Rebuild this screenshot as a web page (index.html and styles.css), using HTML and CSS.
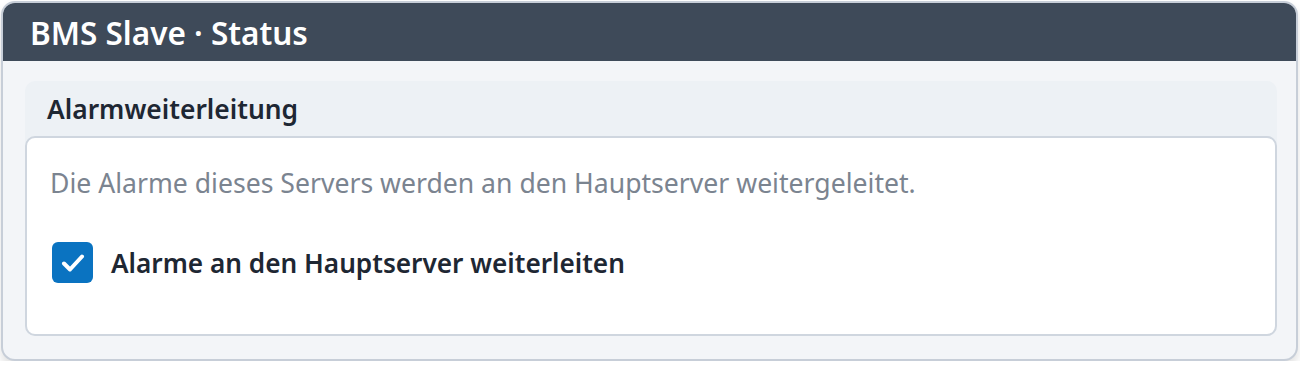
FILE: index.html
```html
<!DOCTYPE html>
<html lang="de">
<head>
<meta charset="utf-8">
<link rel="stylesheet" href="styles.css">
</head>
<body>
<div class="card">
  <div class="card-header">BMS Slave · Status</div>
  <div class="card-body">
    <section class="section">
      <div class="section-title">Alarmweiterleitung</div>
      <div class="section-content">
        <p class="desc">Die Alarme dieses Servers werden an den Hauptserver weitergeleitet.</p>
        <label class="check">
          <span class="box">
            <svg width="26" height="26" viewBox="0 0 26 26"><path d="M4 13.5 L10 19.5 L22 6.5" fill="none" stroke="#fff" stroke-width="4" stroke-linecap="round" stroke-linejoin="round"/></svg>
          </span>
          <span class="check-label">Alarme an den Hauptserver weiterleiten</span>
        </label>
      </div>
    </section>
  </div>
</div>
</body>
</html>
```
FILE: styles.css
```css
* { box-sizing: border-box; }
html, body { margin: 0; background: #ffffff; }
body {
  padding: 1px 2px 0 1px;
  font-family: "Noto Sans", "Open Sans", sans-serif;
}
.card {
  width: 1297px;
  border: 2px solid #c7ced8;
  border-radius: 14px;
  background: #f3f5f8;
  overflow: hidden;
  box-shadow: 0 6px 10px rgba(0, 0, 0, 0.12);
}
.card-header {
  height: 58px;
  background: #3e4a59;
  color: #ffffff;
  font-size: 31.5px;
  font-weight: 600;
  display: flex;
  align-items: center;
  padding-left: 27px;
}
.card-body {
  padding: 20px 19px 23px 22px;
}
.section {
  background: #edf1f5;
  border-radius: 10px;
}
.section-title {
  height: 55px;
  display: flex;
  align-items: center;
  padding-left: 22px;
  font-size: 26.4px;
  font-weight: 600;
  color: #1e2733;
}
.section-content {
  background: #ffffff;
  border: 2px solid #cfd6df;
  border-radius: 10px;
  padding: 27px 23px 51px 23px;
}
.desc {
  margin: 0;
  font-size: 26.6px;
  color: #7b8490;
  line-height: 36px;
}
.check {
  display: flex;
  align-items: center;
  margin-top: 41px;
  gap: 18px;
}
.box {
  width: 41px;
  height: 41px;
  border-radius: 6px;
  background: #0a73c1;
  display: flex;
  align-items: center;
  justify-content: center;
  margin-left: 2px;
}
.check-label {
  font-size: 26.2px;
  font-weight: 600;
  color: #1e2733;
}
```
